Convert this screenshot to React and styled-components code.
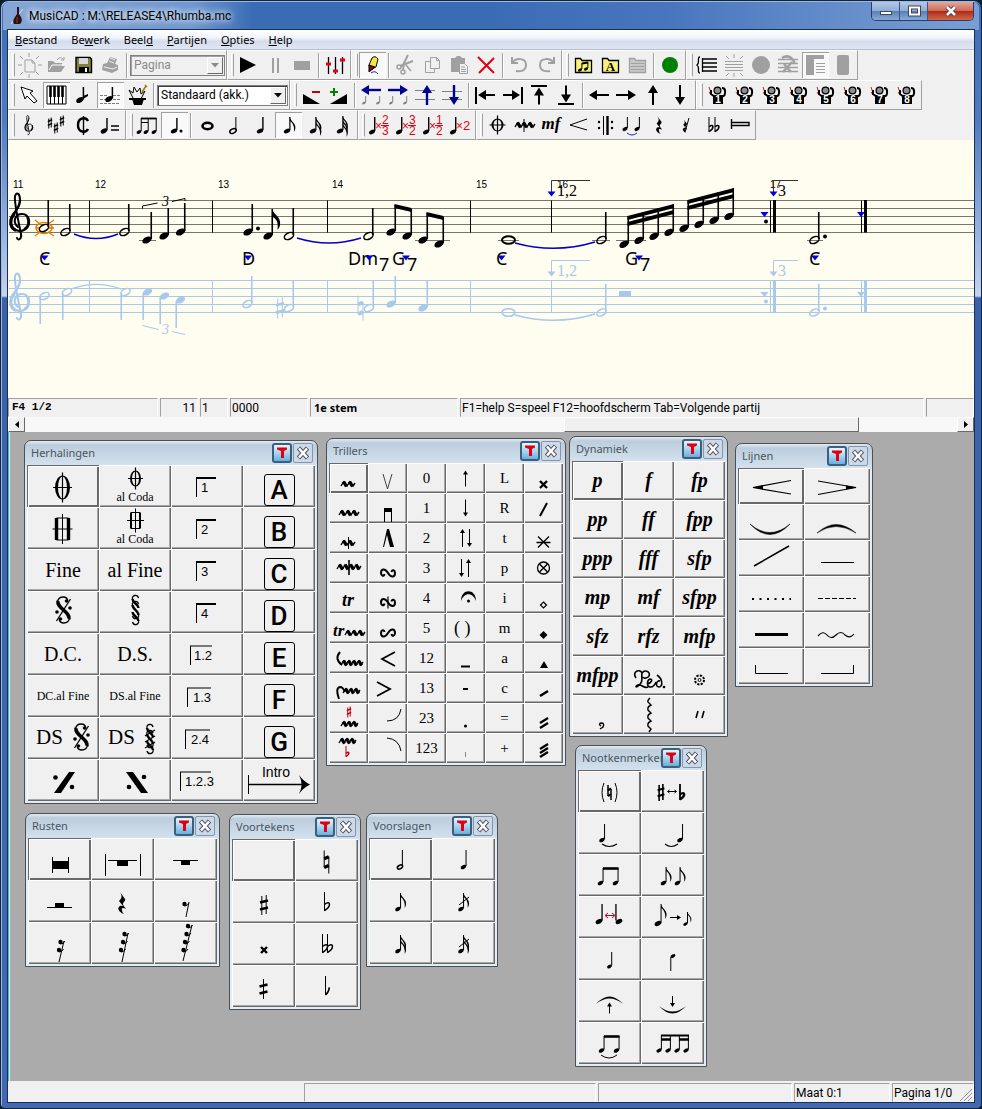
import styled, { createGlobalStyle } from "styled-components"

const ui = `"Noto Sans", "Open Sans", sans-serif`
const roboto = `Roboto, "Noto Sans", sans-serif`
const serif = `"Liberation Serif", serif`

/* ---------- notation glyphs ---------- */

const Note = ({ x, y, s = 5, top, bottom, open, flags = 0, w = 1, k = 1, left }) => {
    const sx = bottom || left ? x - s * 0.85 : x + s * 0.85
    return <g>
        <ellipse cx={x} cy={y} rx={s} ry={s * 0.62} transform={`rotate(-28 ${x} ${y})`}
            fill={open ? "none" : "currentColor"} stroke="currentColor" strokeWidth={open ? 1.5 : 0} />
        <path d={`M${sx},${y - (bottom ? -1 : 1)}V${bottom || top}`} stroke="currentColor" strokeWidth={w} />
        {Array.from({ length: flags }, (_, i) => (
            <path key={i} fill="currentColor" transform={`translate(${sx} ${top + i * 4 * k}) scale(${k})`}
                d={w > 1.5
                    ? "M0,0C.5,4 7,6 6,12C5.8,14 5,15 4,16C5,10 3,7.5 0,6Z"
                    : "M0,0C.5,4 6,6 5.5,11C5.3,13 4.6,14 4,15C5,10 3,6 0,4Z"} />
        ))}
    </g>
}

const Sharp = ({ x, y, h = 20, w = 1, half }) => {
    const a = h * 0.11, b = h * 0.2
    return <g stroke="currentColor">
        {half
            ? <path d={`M${x},${y - h / 2}V${y + h / 2}`} strokeWidth={w} />
            : <path d={`M${x - a},${y - h / 2 + 1}V${y + h / 2}M${x + a},${y - h / 2}V${y + h / 2 - 1}`} strokeWidth={w} />}
        <path d={`M${x - b},${y - h * 0.13}l${b * 2},-2M${x - b},${y + h * 0.22}l${b * 2},-2`} strokeWidth={h * 0.13} />
    </g>
}

const Natural = ({ x, y, h = 22, w = 1 }) => (
    <g stroke="currentColor">
        <path d={`M${x - h * 0.1},${y - h / 2}V${y + h * 0.24}M${x + h * 0.1},${y - h * 0.24}V${y + h / 2}`} strokeWidth={w} />
        <path d={`M${x - h * 0.1},${y - h * 0.14}l${h * 0.2},-2M${x - h * 0.1},${y + h * 0.24}l${h * 0.2},-2`} strokeWidth={h * 0.15} />
    </g>
)

const Flat = ({ x, y, h = 18, w = 1, half }) => (
    <g stroke="currentColor" fill="none">
        <path d={`M${x},${y}V${y + h}`} strokeWidth={w} />
        <path strokeWidth={w + 0.5} d={half
            ? `M${x},${y + h}Q${x + h * 0.18},${y + h * 0.85} ${x + h * 0.2},${y + h * 0.6}`
            : `M${x},${y + h * 0.65}C${x + h * 0.35},${y + h * 0.4} ${x + h * 0.35},${y + h * 0.78} ${x},${y + h - 0.5}`} />
    </g>
)

const Clef = () => (
    <g fill="none" stroke="currentColor" strokeLinecap="round">
        <path strokeWidth="2" d="M18,87C12,82 15,74 22,74C30,74 31,86 24,90C20,92 16,91 13,88" />
        <path strokeWidth="3.2" d="M15,90C9,86 10,79 14,74" />
        <path strokeWidth="2.4" d="M13,75C16,70 20,67 20,60" />
        <path strokeWidth="2" d="M20,60C20,54 17,51 15,56C14,62 17,74 21,94C22,99 18,101 17,98" />
        <path strokeWidth="3" d="M28,78C30,83 28,87 25,89" />
    </g>
)

const Coda = ({ x, y, rx = 7.5, ry = 12, t = 3 }) => (
    <g>
        <path fill="currentColor" fillRule="evenodd"
            d={`M${x - rx},${y}a${rx},${ry} 0 1 0 ${rx * 2},0a${rx},${ry} 0 1 0 ${-rx * 2},0ZM${x - rx + t},${y}a${rx - t},${ry - 1} 0 1 0 ${(rx - t) * 2},0a${rx - t},${ry - 1} 0 1 0 ${-(rx - t) * 2},0Z`} />
        <path stroke="currentColor" strokeWidth="1.2" d={`M${x},${y - ry - 3}V${y + ry + 3}M${x - rx - 2},${y}H${x + rx + 2}`} />
    </g>
)

const SquareCoda = ({ x, y, rx = 6, ry = 11, t = 3.4 }) => (
    <g stroke="currentColor" fill="none">
        <path strokeWidth={t} d={`M${x - rx},${y - ry}V${y + ry}M${x + rx},${y - ry}V${y + ry}`} />
        <path d={`M${x - rx},${y - ry}H${x + rx}M${x - rx},${y + ry}H${x + rx}M${x},${y - ry - 4}V${y + ry + 4}M${x - rx - 4},${y}H${x + rx + 4}`} />
    </g>
)

const Segno = ({ x, y }) => (
    <g transform={`translate(${x} ${y})`} fill="none" stroke="currentColor">
        <path strokeWidth="1.5" d="M4,-9C5,-14 -5,-15 -6,-8M-4,9C-5,14 5,15 6,8" />
        <path strokeWidth="3.6" d="M-5.5,-9C-7,-2 7,2 5.5,9" />
        <circle cx="3" cy="-9" r="1.3" fill="currentColor" />
        <circle cx="-3" cy="9" r="1.3" fill="currentColor" />
        <path strokeWidth="1.3" d="M7,-11L-7,11" />
        <circle cx="-6.5" cy="2" r="1.8" fill="currentColor" stroke="none" />
        <circle cx="6.5" cy="-2" r="1.8" fill="currentColor" stroke="none" />
    </g>
)

const TallSegno = ({ x, y, cross }) => (
    <g transform={`translate(${x} ${y})`} fill="none" stroke="currentColor">
        <path strokeWidth="1.3" d="M3,-12C2,-16 -4,-15 -3,-11M3,-6C2,-10 -4,-9 -3,-5M-3,6C-2,10 4,9 3,5M-3,12C-2,16 4,15 3,11" />
        <path strokeWidth="2.4" d="M-3,-11C-3,-7 3,-6 3,-2M-3,-5C-3,-1 3,1 3,5M-3,2C-3,6 3,7 3,11" />
        {cross && <path d="M5,-9L-5,-3M5,-3L-5,3M5,3L-5,9" strokeWidth="1.3" />}
    </g>
)

const Trill = ({ x, y, n, step = 6 }) => (
    <g stroke="currentColor" fill="none">
        {Array.from({ length: n }, (_, i) => (
            <path key={i} strokeWidth="3.4" d={`M${x + 2.5 + i * step},${y - 2.5}l3,5`} />
        ))}
        <path strokeWidth="1.4" d={`M${x},${y + 2}` + Array.from({ length: n }, () => `l2.5,-4l${step - 2.5},4`).join("") + "l2,-3"} />
    </g>
)

const Turn = ({ x, y, flip, cut }) => (
    <g transform={`translate(${x} ${y}) scale(1 ${flip ? -1 : 1})`} fill="none" stroke="currentColor" strokeWidth="2">
        <path d="M-3.5,1C-4,4 -7,3 -7,0C-7,-4.5 -3,-5 0,0C3,5 7,4.5 7,0C7,-3 4,-4 3.5,-1" />
        {cut && <path d="M0,-6V6" strokeWidth="1.2" />}
    </g>
)

const Arrow = ({ x, y, l, dir = "up", s = 2.5, w = 1 }) => {
    const rot = { up: 0, right: 90, down: 180, left: 270 }[dir]
    return <g transform={`translate(${x} ${y}) rotate(${rot})`}>
        <path d={`M0,${l / 2}V${-l / 2 + s}`} stroke="currentColor" strokeWidth={w} />
        <path d={`M0,${-l / 2}l${s},${s * 1.6}h${-s * 2}Z`} fill="currentColor" />
    </g>
}

const QuarterRest = ({ x, y, k = 1 }) => (
    <path transform={`translate(${x} ${y}) scale(${k})`} fill="currentColor"
        d="M-2,-11L3,-4C4,-2 1,-1 1,1C1,3 3,4 4,6C1,4 -1,5 0,7C0,9 1,10 2,11C-2,10 -5,6 -3,4C-2,2 0,3 1,3L-3,-2C-1,-4 1,-6 -2,-11Z" />
)

const FlagRest = ({ dots, stem }) => (
    <g>
        <path d={`M${stem[0]},${stem[1]}L${stem[2]},${stem[3]}`} stroke="currentColor" />
        {dots.map(([x, y]) => <g key={y}>
            <circle cx={x} cy={y} r="2.2" fill="currentColor" />
            <path d={`M${x},${y + 2}Q${x + 3},${y + 2} ${x + 4.5},${y - 1}`} fill="none" stroke="currentColor" />
        </g>)}
    </g>
)

const L = ({ d, w = 1, ...rest }) => <path d={d} fill="none" stroke="currentColor" strokeWidth={w} {...rest} />
const F = ({ d, ...rest }) => <path d={d} fill="currentColor" {...rest} />
const Dot = ({ x, y, r = 2 }) => <circle cx={x} cy={y} r={r} fill="currentColor" />
const T = ({ x, y, size = 12, children, ...rest }) => (
    <text x={x} y={y} fontSize={size} fontFamily="Liberation Serif, serif" fill="currentColor" {...rest}>{children}</text>
)

/* ---------- toolbar icons, drawn on a 27x26 grid ---------- */

const gray = "#a0a0a0"

const Folder = ({ fill, stroke, children }) => <>
    <path d="M5.5,6.5h5l1.5,2h9.5v12h-16Z" fill={fill} stroke={stroke} strokeWidth="1.3" />
    {children}
</>

const Transpose = ({ top, bottom }) => <>
    <Note x={6} y={20} s={3.2} top={5} w={1.4} />
    <g fill="#e00010" fontFamily="Liberation Sans, sans-serif" fontSize="12">
        <text x="9" y="18">×</text>
        {bottom ? <>
            <text x="16" y="12">{top}</text>
            <text x="16" y="23">{bottom}</text>
            <path d="M15,13.5h8" stroke="#e00010" />
        </> : <text x="16" y="18" fontSize="13">{top}</text>}
    </g>
</>

const Conductor = ({ n }) => <>
    <path d="M5,5L7,11M5,10l2,3" stroke="#c02020" fill="none" />
    <path d="M7,8v4l4,3M17,15q5,-1 4,-6q0,-3 -3,-3" stroke="#000" strokeWidth="2" fill="none" />
    <path d="M9,13h10v9H9Z" fill="#000" />
    <circle cx="13.5" cy="8.5" r="4" fill="#000" />
    <circle cx="13.5" cy="8.5" r="2.8" fill="#8c8c8c" />
    <text x="14" y="21" fill="#fff" fontSize="10" fontWeight="bold" textAnchor="middle" fontFamily="Liberation Sans, sans-serif">{n}</text>
</>

const fileTools = [
    ["Nieuw", <g color={gray}><L d="M9,8h7l3,3v9h-10ZM16,8v3h3M13,1v4M13,22v4M2,13h4M22,13h4M4,4l3,3M23,4l-3,3M4,23l3,-3M23,23l-3,-3" /></g>],
    ["Open", <g color={gray}><F d="M5,20V9h5l2,2h7v3h3l-4,6Z" /><L d="M14,8c3,-4 5,-2 7,0m0,-3v3h-3" /><L d="M6,18l3,-5h11" stroke="#fff" /></g>],
    ["Opslaan", <g><path d="M6,5.5h14l1.5,1.5v13.5h-15.5Z" fill="#808040" stroke="#000" strokeWidth="1.4" /><path d="M9,6h9v6h-9Z" fill="#d8d8d8" /><path d="M9,15h10v6h-10Z" fill="#000" /><path d="M15,16h2v4h-2Z" fill="#fff" /></g>],
    ["Afdrukken", <g color={gray}><F d="M6,12l4,-1l3,-6l7,2l-2,5l3,1v5l-6,3l-10,-3Z" /><L d="M13,6l5,2M12,9l5,2M7,15l9,2l4,-2" stroke="#eee" /></g>],
]
const playTools = [
    ["Speel", <F d="M5,5L21,13L5,21Z" />],
    ["Pauze", <L d="M11,6v15M16,6v15" w={2} stroke={gray} />],
    ["Stop", <rect x="5" y="9" width="16" height="9" fill={gray} />],
]
const mixTools = [["Mixer", <g><L d="M6.5,5v17M13.5,5v17M20.5,5v17" w={1.3} /><path d="M4,12h5M11,19h5M18,8h5" stroke="#e00020" strokeWidth="3" /></g>]]
const pencilTools = [["Potlood", <g><path d="M10,13L13,6Q16,3 19,7L17,15L11,18Z" fill="#f4e840" stroke="#000" /><path d="M10,13L16,15L10,20Z" fill="#801010" stroke="#000" /><path d="M12,21q4,-3 7,1" stroke="#2020c0" fill="none" /></g>, true]]
const editTools = [
    ["Knippen", <g color={gray}><L d="M16,3L10,15M21,9L8,14" w={2} /><circle cx="7" cy="15" r="2" fill="none" stroke="currentColor" strokeWidth="1.5" /><circle cx="11" cy="20" r="2" fill="none" stroke="currentColor" strokeWidth="1.5" /><L d="M12,12l-1,6M14,13l5,6" w={1.6} /></g>],
    ["Kopieren", <g color={gray}><L d="M6.5,9.5h6l3,3v8h-9Z" /><path d="M11.5,5.5h6l3,3v8h-9Z" fill="#f0f0f0" stroke="currentColor" /><L d="M17.5,5.5v3h3" /></g>],
    ["Plakken", <g color={gray}><F d="M5,6h4l2,-2h3l2,2h3v14h-14Z" /><path d="M13.5,11.5h5l3,3v7h-8Z" fill="#f0f0f0" stroke="currentColor" /><L d="M15,15h4M15,17.5h5M15,19.5h5" /></g>],
    ["Verwijderen", <L d="M5,5L21,21M21,6L6,21" w={2} stroke="#e00010" />],
]
const undoTools = [
    ["Ongedaan", <L d="M6,5v6h6M6.5,11C9,6 20,5 20,13C20,19 14,20 10,19" w={2} stroke={gray} />],
    ["Opnieuw", <L d="M21,5v6h-6M20.5,11C18,6 7,5 7,13C7,19 13,20 17,19" w={2} stroke={gray} />],
]
const folderTools = [
    ["Muziekmap", <Folder fill="#f6f27a" stroke="#000"><Note x={10} y={18} s={2.2} top={11} /><Note x={16} y={17} s={2.2} top={10} /><L d="M12,11.5l6,-1" w={2} /></Folder>],
    ["Tekstmap", <Folder fill="#f6f27a" stroke="#000"><T x={13.5} y={19} size={13} fontWeight="bold" textAnchor="middle">A</T></Folder>],
    ["Map", <Folder fill="#c8c8c8" stroke={gray}><L d="M7,11.5h13M7,14.5h13M7,17.5h13" stroke={gray} /></Folder>],
]
const recTools = [["Opname", <circle cx="13" cy="13" r="8" fill="#008000" />]]
const viewTools = [
    ["Systeem", <L d="M6,5q-2,0 -1.5,4q0,3 -1.5,4q1.5,1 1.5,4q-.5,4 1.5,4M8.5,6v14M8,7h15M8,11h15M8,15h15M8,19h15" w={1.3} />],
    ["Balk", <g color={gray}><L d="M4,9.5h18M4,12.5h18M4,15.5h18M4,18.5h18M5,4l3,3M13,2v4M22,4l-3,3M5,24l3,-3M13,25v-4M22,24l-3,-3" /></g>],
    ["Cirkel", <circle cx="13" cy="13" r="9" fill={gray} />],
    ["Balk wissen", <g color={gray}><L d="M3,7.5h20M3,11.5h20M3,15.5h20M3,19.5h20" w={1.5} /><L d="M7,6q6,-4 11,2l2,4M8,20l9,-10M9,12l7,8" w={2.5} /></g>],
    ["Indeling", <g color={gray}><F d="M4,3h18v4h-10v16h-8Z" /><L d="M14,11.5h9M14,14.5h9M14,17.5h9M14,20.5h9" /></g>, true],
    ["Kolom", <rect x="8" y="3" width="12" height="20" rx="2" fill={gray} />],
]
const modeTools = [
    ["Selecteer", <path d="M5,5L17,9L14,11L21,19L18,21L11,14L9,17Z" fill="#fff" stroke="#000" />],
    ["Klavier", <g><path d="M4,4h19v18h-19Z" fill="#fff" stroke="#000" /><L d="M7.5,4v18M11.5,4v18M15.5,4v18M19.5,4v18" /><L d="M7.5,4v11M11.5,4v11M15.5,4v11M19.5,4v11" w={2.6} /></g>, true],
    ["Noot", <g><Note x={10} y={18} s={4} top={5} w={1.5} /><F d="M13,14l5,-2v2l-5,3Z" /></g>],
    ["Noot op balk", <g><L d="M3,13.5h7M16,13.5h7M3,17.5h7M16,17.5h7M3,21.5h20" stroke="#808080" strokeDasharray="3 1" /><Note x={12} y={17} s={4} top={5} w={1.5} /></g>, true],
    ["Goochel", <g><path d="M8,17h12l-2,6h-8Z" fill="#000" /><L d="M5,17h17" w={2} /><L d="M9,16l-4,-8l4,3l1,-6l3,5l3,-4l1,6l4,-3l-4,8" /><L d="M18,10l4,-6M21,3l2,2" w={1.5} stroke="#908000" /></g>],
]
const volTools = [
    ["Zachter", <g><F d="M5,12L22,22H5Z" /><path d="M14,10h8" stroke="#c00010" strokeWidth="2" /></g>],
    ["Harder", <g><F d="M22,12L5,22H22Z" /><path d="M5,10h8M9,6v8" stroke="#008000" strokeWidth="2" /></g>],
]
const navy = "#000090"
const shiftTools = [
    ["Noten links", <g><g color={navy}><Arrow x={13} y={8} l={20} dir="left" s={5} w={2.4} /></g><g color="#808080"><Note x={6} y={21} s={2} top={14} /><Note x={20} y={21} s={2} top={14} /></g></g>],
    ["Noten rechts", <g><g color={navy}><Arrow x={13} y={8} l={20} dir="right" s={5} w={2.4} /></g><g color="#808080"><Note x={6} y={21} s={2} top={14} /><Note x={20} y={21} s={2} top={14} /></g></g>],
    ["Noten op", <g><L d="M3,8.5h20M3,17.5h20" stroke="#808080" /><g color={navy}><Arrow x={15} y={13} l={20} s={5} w={2.4} /></g></g>],
    ["Noten neer", <g><L d="M3,9.5h20M3,17.5h20" stroke="#808080" /><g color={navy}><Arrow x={15} y={13} l={20} dir="down" s={5} w={2.4} /></g></g>],
]
const jumpTools = [
    ["Begin", <g><L d="M4,5v17" w={2} /><Arrow x={14.5} y={13} l={17} dir="left" s={5} w={2} /></g>],
    ["Einde", <g><L d="M23,5v17" w={2} /><Arrow x={12.5} y={13} l={17} dir="right" s={5} w={2} /></g>],
    ["Boven", <g><L d="M5,4h16" w={2} /><Arrow x={13} y={14} l={17} s={5} w={2} /></g>],
    ["Onder", <g><L d="M5,22h16" w={2} /><Arrow x={13} y={12} l={17} dir="down" s={5} w={2} /></g>],
]
const moveTools = [["Links", "left"], ["Rechts", "right"], ["Omhoog", "up"], ["Omlaag", "down"]]
    .map(([label, dir]) => [label, <Arrow x={13} y={13} l={20} dir={dir} s={5} w={2} />])
const partTools = [1, 2, 3, 4, 5, 6, 7, 8].map((n) => [`Partij ${n}`, <Conductor n={n} />])
const keyTools = [
    ["Sleutel", <g transform="translate(4.5 -19) scale(.42)"><Clef /></g>],
    ["Voortekening", <g><Sharp x={7} y={11} h={11} /><Sharp x={13} y={16} h={11} /><Sharp x={19} y={9} h={11} /></g>],
    ["Maatsoort", <g><L d="M18,9C16,5 8,5 8,13C8,21 16,21 18,17" w={2.4} /><L d="M13.5,4v19" w={1.4} /></g>],
    ["Tempo", <g><Note x={7} y={19} s={3.5} top={6} w={1.4} /><L d="M14,14h8M14,18h8" w={1.3} /></g>],
]
const groupTools = [
    ["Balken", <g><Note x={5} y={20} s={2.6} top={6} /><Note x={12} y={20} s={2.6} top={6} /><Note x={20} y={20} s={2.6} top={6} /><L d="M7,6.5h15.5" w={1.8} /><L d="M7,10.5h7" /></g>],
    ["Gepunt", <g><Note x={13} y={19} s={3.4} top={6} w={1.4} /><Dot x={20} y={19} r={1.5} /></g>, true],
]
const lengthTools = [
    ["Hele", <ellipse cx="13.5" cy="14" rx="5" ry="3.2" fill="none" stroke="#000" strokeWidth="2.6" />],
    ["Halve", <Note x={12} y={19} s={3.4} top={5} open />],
    ["Kwart", <Note x={12} y={19} s={3.4} top={5} w={1.4} />],
    ["Achtste", <Note x={12} y={19} s={3.4} top={5} w={1.2} flags={1} />, true],
    ["Zestiende", <Note x={11} y={19} s={3.4} top={5} w={1.2} flags={2} />],
    ["32e", <Note x={11} y={19} s={3.4} top={4} w={1.2} flags={3} k={0.9} />],
]
const ratioTools = [
    ["x 2/3", <Transpose top="2" bottom="3" />],
    ["x 3/2", <Transpose top="3" bottom="2" />],
    ["x 1/2", <Transpose top="1" bottom="2" />],
    ["x 2", <Transpose top="2" />],
]
const signTools = [
    ["Coda", <Coda x={13.5} y={13} rx={6} ry={6.5} t={2} />],
    ["Triller", <g><Trill x={4} y={13} n={3} /><L d="M13,7v13" /></g>],
    ["mf", <T x={13} y={17} size={17} fontWeight="bold" fontStyle="italic" textAnchor="middle">mf</T>],
    ["Lijn", <L d="M22,7L5,13L22,18" />],
    ["Herhaling", <g><L d="M11.5,4v19" /><L d="M15.5,4v19" w={2.4} /><Dot x={7} y={10} r={1.2} /><Dot x={7} y={16} r={1.2} /><Dot x={20} y={10} r={1.2} /><Dot x={20} y={16} r={1.2} /></g>],
    ["Boog", <g><Note x={6} y={17} s={2.8} top={5} /><Note x={18} y={17} s={2.8} top={5} /><L d="M8,21q5,4 10,0" stroke="#2020a0" /></g>],
    ["Rust", <QuarterRest x={13} y={13} k={0.8} />],
    ["Rust weg", <g><QuarterRest x={12} y={14} k={0.6} /><L d="M16,6l-4,14" /></g>],
    ["Mollen", <g><Flat x={9} y={5} h={15} /><Flat x={15} y={5} h={15} /></g>],
    ["Liniaal", <L d="M4.5,7v10M4,10.5h18v3h-18" w={1.4} />],
]

/* ---------- palettes ---------- */

const Volta = ({ x = 25, w = 20, label, tx }) => <>
    <L d={`M${x}.5,32V13`} />
    <L d={`M${x},13H${x + w}`} w={label.length > 1 ? 1 : 2} />
    <text x={tx || x + 5} y={27} fontSize="13" fontFamily="Liberation Sans, sans-serif">{label}</text>
</>

const small = (text) => ({ text, size: 12 })

const herhalingen = [
    <Coda x={35.5} y={22.5} />,
    <><Coda x={36.5} y={13.5} rx={5.5} ry={8} t={2} /><T x={36} y={36} size={12} textAnchor="middle">al Coda</T></>,
    <Volta label="1" />, { box: "A" },
    <SquareCoda x={35.5} y={22} />,
    <><SquareCoda x={36.5} y={13.5} rx={4.5} ry={8} t={2} /><T x={36} y={36} size={12} textAnchor="middle">al Coda</T></>,
    <Volta label="2" />, { box: "B" },
    "Fine", "al Fine", <Volta label="3" />, { box: "C" },
    <Segno x={36.5} y={19} />, <TallSegno x={36.5} y={19} />, <Volta label="4" />, { box: "D" },
    "D.C.", "D.S.", <Volta x={19} w={22} tx={23} label="1.2" />, { box: "E" },
    small("DC.al Fine"), small("DS.al Fine"), <Volta x={16} w={24} tx={22} label="1.3" />, { box: "F" },
    <><T x={9} y={27} size={21}>DS</T><Segno x={54.5} y={20} /></>,
    <><T x={9} y={27} size={21}>DS</T><TallSegno x={51} y={22} cross /></>,
    <Volta x={14} w={25} tx={20} label="2.4" />, { box: "G" },
    <><F d="M27,34L42,13H48L34,34Z" /><Dot x={28.5} y={18.5} r={2.3} /><Dot x={45} y={28} r={2.3} /></>,
    <><F d="M27,13H34L49,34H42Z" /><Dot x={45} y={18} r={2.3} /><Dot x={30} y={28} r={2.3} /></>,
    <Volta x={9} w={31} tx={14} label="1.2.3" />,
    <><text x="33" y="18" fontSize="14" textAnchor="middle" fontFamily="Liberation Sans, sans-serif">Intro</text>
        <L d="M5.5,16V35" /><L d="M6,25.5H62" w={1.4} /><F d="M56,16Q60,22 67,25.5Q60,29 56,35Q61,25.5 56,16Z" /></>,
]

const trillers = [
    <Trill x={12} y={21} n={2} />, <L d="M15,11L19.5,26L24,11" stroke="#444" />, "0", <Arrow x={19.5} y={15.5} l={16} />, "L", <L d="M16,18l7,7M23,18l-7,7" w={2.4} />,
    <Trill x={10} y={20} n={3} />, <><F d="M16,15h8v4h-8Z" /><L d="M16.5,15v14M23.5,15v14" /></>, "1", <Arrow x={19.5} y={15} l={17} dir="down" />, "R", <L d="M16,23L23,10" w={2} />,
    <><Trill x={12} y={20} n={2} /><L d="M19.5,14v12" /></>, <F d="M15,24L19,6H21L26,24H22L19,12L16,24Z" />, "2", <><Arrow x={16.5} y={15} l={18} /><Arrow x={23.5} y={15} l={18} dir="down" /></>, "t", <L d="M14,13.5l11,11M25,13.5l-11,11M12.5,19.5h14" w={1.3} />,
    <><Trill x={8} y={14} n={4} step={5.5} /><L d="M20,7v15" w={1.6} /></>, <Turn x={20} y={20} />, "3", <><Arrow x={15.5} y={15} l={18} dir="down" /><Arrow x={22.5} y={15} l={18} /></>, "p", <><circle cx="19.5" cy="15" r="6" fill="none" stroke="#000" strokeWidth="1.3" /><L d="M15.5,11l8,8M23.5,11l-8,8" w={1.4} /></>,
    <T x={13} y={23} size={18} fontWeight="bold" fontStyle="italic">tr</T>, <Turn x={20} y={19.5} cut />, "4", <><F d="M15,18C15,5 30,5 30,18C27,9 18,9 15,18Z" /><Dot x={22.5} y={18} r={1.5} /></>, "i", <path d="M19.5,19l3,3l-3,3l-3,-3Z" fill="none" stroke="#000" strokeWidth="1.2" />,
    <><T x={4} y={23} size={17} fontWeight="bold" fontStyle="italic">tr</T><Trill x={16} y={20} n={3} /></>, <Turn x={20} y={20} flip />, "5", <T x={8} y={21} size={18}>( )</T>, "m", <F d="M19.5,18l4,4l-4,4l-4,-4Z" />,
    <><L d="M11,9Q5,16 13,22" w={2} /><Trill x={12} y={20} n={4} step={5} /></>, <L d="M27,9L14,16L27,23" w={1.8} />, "12", <L d="M15,23.5h9" w={2} />, "a", <F d="M20,18l4,7h-8Z" />,
    <><L d="M10,26Q6,15 11,14Q14,14 16,19" w={2} /><Trill x={14} y={18} n={3} step={5} /></>, <L d="M9,9L22,16L9,23" w={1.8} />, "13", <L d="M17,16h5" w={2} />, "c", <L d="M16,23L24,18" w={2.6} />,
    <><g color="#c00010"><Sharp x={20} y={9} h={11} /></g><Trill x={12} y={21} n={3} step={5} /></>, <L d="M19,18Q31,18 33,6" />, "23", <Dot x={19.5} y={23} r={1.5} />, "=", <L d="M16,20L24,15M16,25L24,20" w={2.2} />,
    <><Trill x={10} y={8} n={3} step={5} /><g color="#c00010"><Flat x={17} y={13} h={11} /></g></>, <L d="M19,5Q31,6 33,18" />, "123", <L d="M19.5,19v5" stroke="#888" />, "+", <L d="M16,16L24,11M16,20L24,15M16,24L24,19" w={2.2} />,
]

const dynamiek = [
    "p", "f", "fp", "pp", "ff", "fpp", "ppp", "fff", "sfp", "mp", "mf", "sfpp", "sfz", "rfz", "mfp", "mfpp",
    <><L w={1.6} d="M13,22C9,16 16,12 19,17C22,13 28,16 26,20C25,22 21,23 20,21M19,17C18,22 21,26 15,30C13,32 12,30 15,29C19,28 21,33 25,31M24,28C29,27 30,23 27,23C24,24 23,31 28,31C31,31 32,28 33,26M37,25C33,24 32,31 36,31C40,31 40,23 34,19" /><Dot x={41} y={31} r={1.3} /></>,
    <><circle cx="25.5" cy="24" r="4.5" fill="none" stroke="#000" strokeWidth="2" strokeDasharray="2.2 1.3" /><circle cx="25.5" cy="24" r="1.5" fill="none" stroke="#000" /></>,
    <L w={1.4} d="M29,31q-3,-2 0,-3q4,0 2,4l-3,2" />,
    <L w={1.4} d="M27,3q-3,3 -2,4l3,3q-4,2 -3,5l3,3q-4,2 -3,5l3,3q-4,2 -3,5l3,3l-2,3" />,
    <L w={1.6} d="M24,16L22,23M30,16L28,23" />,
]

const lijnen = [
    <><L d="M53,12.5L15,19.5L53,26" w={1.2} /><F d="M15,19.5L25,17.5V21.5Z" /></>,
    <><L d="M14,13L52,19.5L14,26.5" w={1.2} /><F d="M52,19.5L42,17.5V21.5Z" /></>,
    <F d="M12,20Q32,37 52,20Q32,41 12,20Z" stroke="currentColor" strokeWidth=".5" />,
    <F d="M13,29Q32,12 52,29Q32,16 13,29Z" stroke="currentColor" strokeWidth=".5" />,
    <L d="M16,26L51,6" w={1.5} />, <L d="M17,22.5H50" />,
    <L d="M14,23H53" w={2} strokeDasharray="2 5.5" />, <L d="M14,22.5H52" strokeDasharray="5 2" />,
    <L d="M17,22.5H50" w={3} />, <L d="M14,24q5,-6 9,-1q4,5 9,0q5,-5 9,0q5,4 9,-1" w={1.2} />,
    <L d="M17.5,17V25.5H50" />, <L d="M49.5,17V25.5H17" />,
]

const rusten = [
    <><F d="M25,23h16v8h-16Z" /><L d="M24.5,19v16M40.5,19v16" /></>,
    <><L d="M14.5,16v22M49.5,16v22M17,22.5H46" /><F d="M26,22h11v6h-11Z" /></>,
    <><L d="M19,22.5H44" /><F d="M27,22h9v5h-9Z" /></>,
    <><L d="M19,27.5H44" /><F d="M27,23h9v4h-9Z" /></>,
    <QuarterRest x={31} y={23} />,
    <FlagRest dots={[[30.5, 24]]} stem={[35, 22, 32, 37]} />,
    <FlagRest dots={[[32.5, 20], [31, 28]]} stem={[36, 19, 31, 40]} />,
    <FlagRest dots={[[33.5, 12], [32, 20], [30, 28]]} stem={[37, 11, 31, 40]} />,
    <FlagRest dots={[[34, 4], [32.5, 12], [31, 20], [29.5, 28]]} stem={[38, 3, 29, 39]} />,
]

const voortekens = [
    null, <Natural x={31.5} y={23} h={23} />,
    <Sharp x={32} y={24} h={20} />, <Flat x={29.5} y={11} h={19} />,
    <L d="M29,24l6,6M35,24l-6,6" w={2.4} />, <><Flat x={27.5} y={11} h={19} /><Flat x={32.5} y={11} h={19} /></>,
    <Sharp x={31.5} y={24} h={20} half />, <Flat x={30.5} y={11} h={19} half />,
]

const voorslagen = [
    <Note x={31} y={29} s={2.8} top={12} open />, <Note x={31.5} y={29} s={3} top={12} />,
    <Note x={29} y={29} s={3} top={13} flags={1} />, <><Note x={29} y={29} s={3} top={13} flags={1} /><L d="M27,25L37,17" /></>,
    <Note x={29} y={29} s={3} top={13} flags={2} />, <><Note x={29} y={29} s={3} top={13} flags={2} /><L d="M27,25L37,17" /></>,
]

const redSwap = <g color="#c00010"><L d="M28,19.5h8M30,17l-3,2.5l3,2.5M34,17l3,2.5l-3,2.5" /></g>

const nootkenmerken = [
    <><Natural x={31.5} y={22.5} h={15} w={1.5} /><L d="M26,13Q22,22.5 26,32M37,13Q41,22.5 37,32" /></>,
    <><Sharp x={20} y={22.5} h={17} w={1.6} /><L d="M27,21.5h8M28.5,20l-2,1.5l2,1.5M33.5,20l2,1.5l-2,1.5" /><Flat x={39} y={14} h={16} w={1.8} /></>,
    <><Note x={24} y={28} s={3} top={12} /><L d="M24,32q7,5 15,0" w={1.2} /></>,
    <><Note x={39} y={28} s={3} top={12} /><L d="M24,32q6,5 13,0" w={1.2} /></>,
    <><Note x={22.5} y={29} s={3} top={14} /><Note x={37.5} y={29} s={3} top={14} /><L d="M25,14.5H40.5" w={2.6} /></>,
    <><Note x={22.5} y={29} s={3} top={13} flags={1} /><Note x={36.5} y={29} s={3} top={13} flags={1} /></>,
    <><Note x={21} y={25.5} s={3.6} top={8} w={1.3} /><Note x={41} y={25.5} s={3.6} top={8} w={1.3} left />{redSwap}</>,
    <><Note x={17} y={27.5} s={3.6} top={8} flags={1} /><Arrow x={34.5} y={21.5} l={11} dir="right" /><Note x={44.5} y={28} s={2.4} top={16} flags={1} k={0.7} /></>,
    <Note x={31.5} y={28.5} s={2.6} top={14} />,
    <Note x={32} y={18} s={2.6} bottom={33} />,
    <><F d="M18,24Q31.5,9 45,24Q31.5,13 18,24Z" /><Arrow x={31.5} y={28} l={11} /></>,
    <><F d="M18,26Q31.5,41 45,26Q31.5,37 18,26Z" /><Arrow x={31.5} y={21.5} l={11} dir="down" /></>,
    <><Note x={23.5} y={28.5} s={3} top={14} /><Note x={38.5} y={28.5} s={3} top={14} /><L d="M26,14.5H41.5" w={2.6} /><L d="M23,33q8,6 16,0" /></>,
    <>{[18, 27, 36, 45].map((x) => <Note key={x} x={x} y={28.5} s={2.8} top={13} />)}<L d="M20,13.5H48" w={2} /><L d="M20,17.5H30M38,17.5H48" w={2.4} /></>,
]

const palettes = [
    { title: "Herhalingen", x: 16, y: 8, cols: 4, w: 72, h: 42, cells: herhalingen, font: `20px ${serif}` },
    { title: "Trillers", x: 318, y: 6, cols: 6, w: 39, h: 30, cells: trillers, font: `15px ${serif}` },
    { title: "Dynamiek", x: 561, y: 4, cols: 3, w: 51, h: 39, cells: dynamiek, font: `italic bold 20px ${serif}` },
    { title: "Lijnen", x: 727, y: 11, cols: 2, w: 66, h: 36, cells: lijnen },
    { title: "Rusten", x: 17, y: 381, cols: 3, w: 63, h: 42, cells: rusten },
    { title: "Voortekens", x: 221, y: 382, cols: 2, w: 63, h: 42, cells: voortekens },
    { title: "Voorslagen", x: 358, y: 381, cols: 2, w: 63, h: 42, cells: voorslagen },
    { title: "Nootkenmerken", x: 567, y: 313, cols: 2, w: 63, h: 42, cells: nootkenmerken },
]

const Cell = ({ cell, w, h, label }) => {
    if (typeof cell === "string") return <CellButton>{cell}</CellButton>
    if (cell && cell.text) return <CellButton $size={cell.size}>{cell.text}</CellButton>
    if (cell && cell.box) return <CellButton><Letter>{cell.box}</Letter></CellButton>
    return <CellButton aria-label={label}>
        <svg width={w} height={h} viewBox={`0 0 ${w} ${h}`}>{cell}</svg>
    </CellButton>
}

const Palette = ({ title, x, y, cols, w, h, cells, font }) => (
    <PaletteWindow $x={x} $y={y}>
        <PaletteTitle $width={cols * w}>
            <h2>{title}</h2>
            <PinButton aria-label={`${title} vastzetten`}>
                <svg width="16" height="16"><path d="M3,2.5h10v2l-3,1.5v7h-3v-7l-4,-1.5Z" fill="#e00010" /></svg>
            </PinButton>
            <CloseButton aria-label={`${title} sluiten`}>
                <svg width="16" height="16"><path d="M3.5,3l9,10M12.5,3l-9,10" stroke="#556" strokeWidth="4.6" /><path d="M4,3.5l8,9M12,3.5l-8,9" stroke="#fff" strokeWidth="2.6" /></svg>
            </CloseButton>
        </PaletteTitle>
        <CellGrid $cols={cols} $w={w} $h={h} $font={font}>
            {cells.map((cell, i) => <Cell key={i} cell={cell} w={w} h={h} label={`${title} ${i + 1}`} />)}
        </CellGrid>
    </PaletteWindow>
)

const Tools = ({ items }) => items.map(([label, icon, pressed]) => (
    <ToolButton key={label} aria-label={label} $pressed={pressed}>
        <svg width="27" height="26" viewBox="0 0 27 26">{icon}</svg>
    </ToolButton>
))

const Combo = ({ label, value, width, disabled }) => (
    <ComboBox $width={width} $disabled={disabled}>
        <select aria-label={label} defaultValue={value} disabled={disabled}><option>{value}</option></select>
        <span><svg width="8" height="5"><path d="M0,0h8l-4,4.5Z" fill="currentColor" /></svg></span>
    </ComboBox>
)

/* ---------- score ---------- */

const Staff = ({ y, stroke, bar }) => <g>
    {[0, 8, 16, 24, 32].map((d) => <line key={d} x1="9" x2="110%" y1={y + d} y2={y + d} stroke={stroke} />)}
    {[89.5, 212.5, 327.5, 470.5, 551.5, 770.5, 861.5].map((x) => <line key={x} x1={x} x2={x} y1={y} y2={y + 32} stroke={bar} />)}
    {[774.5, 865.5].map((x) => <line key={x} x1={x} x2={x} y1={y - 0.5} y2={y + 32} stroke={bar} strokeWidth="3" />)}
</g>

const Mark = ({ x, y }) => <path d={`M${x - 4},${y - 2}h8l-4,5Z`} fill="var(--mark)" />

const Endings = ({ y }) => <>
    <L d={`M551.5,${y + 13}V${y}H590M773.5,${y + 13}V${y}H798`} stroke="var(--ending)" />
    <Mark x={551.5} y={y + 13} />
    <Mark x={773.5} y={y + 13} />
    <T x={557} y={y + 15.5} size={16}>1,2</T>
    <T x={778} y={y + 15.5} size={16}>3</T>
    <Dot x={766} y={y + 41} r={2} />
    <Mark x={764.5} y={y + 33.5} />
    <Mark x={861} y={y + 33.5} />
</>

const measures = [[11, 13], [12, 95], [13, 218], [14, 332], [15, 476], [16, 557], [17, 770]]
const chords = [["C", 39, 44.5], ["D", 242, 248], ["Dm", 348, 369, 379], ["G", 392, 406, 407], ["C", 496, 501.5], ["G", 625, 639, 640], ["C", 809, 815]]
const runs = [624, 639, 654, 669, 684, 699, 714, 729]

const Score = () => (
    <ScoreArea>
        <svg width="100%" height="258" role="img" aria-label="Partituur Rhumba">
            <g transform="translate(-8 0)">
                <Staff y={60.5} stroke="#77776c" bar="#000" />
                <g fontFamily="Liberation Sans, sans-serif" fontSize="10">
                    {measures.map(([n, x]) => <text key={n} x={x} y="48">{n}</text>)}
                </g>
                <Clef />
                <L d="M139,100.5h17M415,100.5h19M432,100.5h18M498,100.5h21M592,100.5h18M616,100.5h18M632,100.5h14M807,100.5h16" stroke="#77776c" />
                <g color="#e08000">
                    <ellipse cx="44" cy="88" rx="8" ry="5.5" fill="none" stroke="currentColor" strokeWidth="1.5" />
                    <L d="M35,80l5,4M54,80l-6,4M35,96l5,-4M54,96l-6,-4M36,88h3M49,88h5" w={1.3} />
                </g>
                <Note x={44} y={88} top={60} w={1.6} open />
                <Note x={65.5} y={92} top={64} w={1.6} open />
                <Note x={124.5} y={92} top={64} w={1.6} open />
                <Note x={147} y={100} top={72} w={1.6} />
                <Note x={164} y={96} top={68} w={1.6} />
                <Note x={180.5} y={92} top={63} w={1.6} />
                <L d="M142.5,68.5v-2.5l15,-3M172,61.5l13,-3v2.5" />
                <T x={162} y={66} size={14} fontStyle="italic">3</T>
                <Note x={248} y={92} top={64} w={1.6} />
                <Dot x={258} y={88.5} />
                <Note x={268} y={96} top={69} w={1.6} flags={1} k={1.3} />
                <Note x={289} y={96} top={68} w={1.6} open />
                <Note x={368.5} y={96} top={68} w={1.6} open />
                <Note x={391} y={92} top={65} w={1.6} />
                <Note x={407} y={96} top={69} w={1.6} />
                <F d="M394.5,64l17,4v4l-17,-4Z" />
                <Note x={423} y={100} top={73} w={1.6} />
                <Note x={439} y={104} top={77} w={1.6} />
                <F d="M426.5,72l17,4v4l-17,-4Z" />
                <ellipse cx="508.5" cy="100" rx="6.5" ry="3.8" fill="none" stroke="#000" strokeWidth="2" />
                <Note x={601.5} y={100} top={72} w={1.6} open />
                {runs.map((x, i) => <Note key={x} x={x} y={104.3 - i * 4} top={i < 4 ? 76 - i * 4 : 60 - (i - 4) * 4} w={1.6} />)}
                <F d="M627.5,76L674,64v4L627.5,80ZM627.5,82L674,70v4L627.5,86ZM687.5,60L734,48v4L687.5,64ZM687.5,66L734,54v4L687.5,70Z" />
                <Note x={814.5} y={100} top={72} w={1.6} open />
                <Dot x={825} y={96.5} />
                <L d="M74,94Q96,103 118,94M297,98Q329,108 361,98M515,103Q555,114 595,102" stroke="#0000c8" w={1.4} />
                <Endings y={40.5} />
                {chords.map(([name, x, mark, seven]) => <g key={x}>
                    <ChordText x={x} y="125">{name}</ChordText>
                    {seven && <ChordText x={seven} y="131">7</ChordText>}
                    <Mark x={mark} y={117.5} />
                </g>)}
            </g>
            <Second transform="translate(-8 0)">
                <Staff y={140.5} stroke="#a8c8ec" bar="#a8c8ec" />
                <g transform="translate(0 80)"><Clef /></g>
                <Note x={44.5} y={156} bottom={184} w={1.6} open />
                <Note x={67} y={152} bottom={180} w={1.6} open />
                <Note x={125.5} y={152} bottom={180} w={1.6} open />
                <Note x={147.5} y={152} bottom={180} w={1.6} />
                <Note x={164.5} y={156} bottom={184} w={1.6} />
                <Note x={180.5} y={160} bottom={188} w={1.6} />
                <L d="M142.5,185.5l16,4M172,191.5l13,3" />
                <T x={162} y={194} size={14} fontStyle="italic">3</T>
                <Note x={247.5} y={164} top={136} w={1.6} open />
                <Sharp x={280} y={168} h={21} />
                <Note x={289} y={168} top={140} w={1.6} open />
                <Natural x={360.5} y={168} h={25} />
                <Note x={369} y={168} top={140} w={1.6} open />
                <Note x={391} y={164} top={136} w={1.6} />
                <Note x={423} y={168} top={140} w={1.6} />
                <ellipse cx="508.5" cy="172.5" rx="6.5" ry="3.8" fill="none" stroke="currentColor" strokeWidth="1.6" />
                <Note x={601.5} y={172.5} top={144} w={1.6} open />
                <F d="M619,151h12v5h-12Z" />
                <Note x={814.5} y={172.5} top={144} w={1.6} open />
                <Dot x={825} y={168.5} />
                <L d="M73,148.5Q97,140 121,149M515,175Q555,186 595,174" w={1.4} />
                <Endings y={120.5} />
            </Second>
        </svg>
    </ScoreArea>
)

const menu = [["", "B", "estand"], ["Be", "w", "erk"], ["Beel", "d", ""], ["", "P", "artijen"], ["", "O", "pties"], ["", "H", "elp"]]

const App = () => (
    <Window>
        <GlobalStyle />
        <TitleBar>
            <svg width="16" height="20" aria-hidden="true">
                <path d="M2,18L14,3" stroke="#ddd" />
                <path d="M8,1h2v7l2,3q2,4 -1,7h-6q-2,-3 1,-7l2,-3Z" fill="#2a1410" />
                <path d="M8,11v6" stroke="#a03020" />
            </svg>
            <h1>MusiCAD : M:\RELEASE4\Rhumba.mc</h1>
            <Caption>
                <button aria-label="Minimaliseren"><svg width="14" height="12"><rect x="1.5" y="6.5" width="11" height="3" fill="#fff" stroke="#445" /></svg></button>
                <button aria-label="Maximaliseren"><svg width="14" height="12"><path d="M3,2.5h9v7h-9Z" fill="none" stroke="#445" strokeWidth="4" /><path d="M3,2.5h9v7h-9Z" fill="none" stroke="#fff" strokeWidth="2" /></svg></button>
                <button aria-label="Sluiten"><svg width="14" height="12"><path d="M3,2l8,8M11,2l-8,8" stroke="#533" strokeWidth="4.5" /><path d="M3,2l8,8M11,2l-8,8" stroke="#fff" strokeWidth="2.6" /></svg></button>
            </Caption>
        </TitleBar>
        <Client>
            <MenuBar>
                {menu.map(([a, key, b]) => <button key={a + key + b}>{a}<u>{key}</u>{b}</button>)}
            </MenuBar>
            <ToolRow>
                <ToolGroup>
                    <Tools items={fileTools} /><Sep />
                    <Combo label="Weergave" value="Pagina" width={95} disabled />
                </ToolGroup>
                <ToolGroup><Tools items={playTools} /><Sep /><Tools items={mixTools} /></ToolGroup>
                <ToolGroup><Tools items={pencilTools} /><Sep /><Tools items={editTools} /><Sep /><Tools items={undoTools} /></ToolGroup>
                <ToolGroup><Tools items={folderTools} /><Sep /><Tools items={recTools} /></ToolGroup>
                <ToolGroup><Tools items={viewTools} /></ToolGroup>
            </ToolRow>
            <ToolRow>
                <ToolGroup>
                    <Tools items={modeTools} /><Sep />
                    <Combo label="Stijl" value="Standaard (akk.)" width={131} />
                </ToolGroup>
                <ToolGroup>
                    <Tools items={volTools} /><Sep /><Tools items={shiftTools} /><Sep />
                    <Tools items={jumpTools} /><Sep /><Tools items={moveTools} />
                </ToolGroup>
                <ToolGroup><Tools items={partTools} /></ToolGroup>
            </ToolRow>
            <ToolRow>
                <ToolGroup><Tools items={keyTools} /></ToolGroup>
                <ToolGroup><Tools items={groupTools} /><Sep /><Tools items={lengthTools} /></ToolGroup>
                <ToolGroup><Tools items={ratioTools} /></ToolGroup>
                <ToolGroup><Tools items={signTools} /></ToolGroup>
            </ToolRow>
            <Score />
            <StatusBar>
                <Status $w={150} $mono>F4 1/2</Status>
                <Status $w={38} $right>11</Status>
                <Status $w={28}>1</Status>
                <Status $w={78}>0000</Status>
                <Status $w={148} $bold>1e stem</Status>
                <Status>F1=help S=speel F12=hoofdscherm Tab=Volgende partij</Status>
                <Status $w={48} />
            </StatusBar>
            <ScrollBar>
                <button aria-label="Naar links"><svg width="4" height="7"><path d="M4,0v7l-4,-3.5Z" /></svg></button>
                <Track $grow={541} />
                <Thumb $grow={294} />
                <Track $grow={98} />
                <button aria-label="Naar rechts"><svg width="4" height="7"><path d="M0,0v7l4,-3.5Z" /></svg></button>
            </ScrollBar>
            <Workspace>
                {palettes.map((p) => <Palette key={p.title} {...p} />)}
            </Workspace>
            <StatusBar $tall>
                <Status $plain />
                <Status $w={292} />
                <Status $w={194} />
                <Status $w={96}>Maat 0:1</Status>
                <Status $w={82}>Pagina 1/0
                    <svg width="14" height="14"><path d="M14,2L2,14M14,6L6,14M14,10L10,14" stroke="#909090" /></svg>
                </Status>
            </StatusBar>
        </Client>
    </Window>
)

const GlobalStyle = createGlobalStyle`
    * { box-sizing:border-box; }
    body {
        margin:0;
        background:#06202a;
        font:11px/16px ${ui};
        color:#000;
    }
    button, select { font:inherit; color:inherit; }
    svg { display:block; }
`
const Window = styled.div`
    min-height:100vh;
    display:flex;
    flex-direction:column;
    padding:0 7px 6px;
    border:1px solid #14233c;
    border-radius:8px 8px 5px 5px;
    background:linear-gradient(#3a6cb6 0, #4f7cc0 120px, #a9c2e8 260px, #c3d5ef 295px, #3862ac 297px, #3f6ab2 100%);
    box-shadow:inset 1px 1px 0 #9db8dc;
`
const TitleBar = styled.header`
    height:28px;
    display:flex;
    align-items:center;
    gap:4px;
    background:linear-gradient(90deg, #86a7d6 0, #6f97d0 190px, #3a6cb5 250px, #3a6cb5 50%, #4876be 68%, #7b9fd4 100%);
    margin:1px -5px 0;
    padding-left:6px;
    border-radius:6px 6px 0 0;
    h1 {
        flex:1;
        margin:0;
        font:12px/16px ${roboto};
        text-shadow:0 0 6px #fff, 0 0 8px #fff;
    }
`
const Caption = styled.div`
    align-self:flex-start;
    display:flex;
    margin-right:5px;
    border:1px solid #2b3f63;
    border-top:0;
    border-radius:0 0 5px 5px;
    overflow:hidden;
    button {
        width:28px;
        height:18px;
        display:flex;
        align-items:center;
        justify-content:center;
        padding:0;
        border:0;
        border-right:1px solid #3c5582;
        background:linear-gradient(#b4c8e4 0, #8faed8 48%, #5c80b4 52%, #86aad8 100%);
    }
    button:last-child {
        width:45px;
        border-right:0;
        background:linear-gradient(#e0a99c 0, #cf6b58 48%, #b02c18 52%, #d06848 100%);
    }
`
const Client = styled.main`
    flex:1;
    display:flex;
    flex-direction:column;
    background:#f0f0f0;
    outline:1px solid #1c2f50;
`
const MenuBar = styled.nav`
    height:20px;
    display:flex;
    align-items:center;
    background:linear-gradient(#fff 0, #f2f4fa 40%, #d5dcec 60%, #dfe5f2 100%);
    border-bottom:1px solid #b8bccc;
    button {
        padding:0 7px;
        border:0;
        background:none;
        line-height:18px;
    }
`
const ToolRow = styled.div`
    display:flex;
    height:30px;
`
const ToolGroup = styled.div`
    display:flex;
    align-items:center;
    padding:0 1px 0 3px;
    border:1px solid #fff;
    border-right-color:#a0a0a0;
    border-bottom-color:#a0a0a0;
    &::before {
        content:"";
        box-sizing:border-box;
        width:3px;
        height:24px;
        margin-right:1px;
        border:1px solid #fff;
        border-right-color:#a0a0a0;
    }
`
const ToolButton = styled.button`
    width:27px;
    height:26px;
    padding:0;
    border:0;
    color:#000;
    background:${(p) => (p.$pressed ? "#f9f9f9" : "none")};
    box-shadow:${(p) => (p.$pressed ? "inset 1px 1px 0 #a0a0a0, inset -1px -1px 0 #fff" : "none")};
`
const Sep = styled.span`
    width:2px;
    height:25px;
    margin:0 2px;
    border-left:1px solid #a0a0a0;
    border-right:1px solid #fff;
`
const ComboBox = styled.div`
    display:flex;
    width:${(p) => p.$width}px;
    height:21px;
    border:1px solid #808080;
    box-shadow:inset 1px 1px 0 ${(p) => (p.$disabled ? "#a0a0a0" : "#404040")};
    background:${(p) => (p.$disabled ? "#f0f0f0" : "#fff")};
    color:${(p) => (p.$disabled ? "#8a8a8a" : "#000")};
    padding:1px;
    select {
        flex:1;
        min-width:0;
        appearance:none;
        border:0;
        padding:0 2px;
        background:none;
        opacity:1;
        font:12px/16px ${roboto};
    }
    span {
        width:16px;
        display:flex;
        align-items:center;
        justify-content:center;
        background:#f0f0f0;
        border:1px solid #fff;
        border-right-color:#696969;
        border-bottom-color:#696969;
    }
`
const ScoreArea = styled.section`
    height:258px;
    overflow:hidden;
    background:#fffdf0;
    color:#000;
    --mark:#0000e0;
    --ending:#333;
`
const Second = styled.g`
    color:#a8c8ec;
    --mark:#a8c8ec;
    --ending:#a8c8ec;
`
const ChordText = styled.text`
    font:18px ${ui};
`
const StatusBar = styled.footer`
    display:flex;
    gap:2px;
    height:${(p) => (p.$tall ? 21 : 19)}px;
    padding-top:${(p) => (p.$tall ? 2 : 0)}px;
    font:12px/18px ${roboto};
`
const Status = styled.div`
    flex:${(p) => (p.$w ? `0 0 ${p.$w}px` : "1")};
    min-width:0;
    display:flex;
    justify-content:${(p) => (p.$right ? "flex-end" : "space-between")};
    padding:${(p) => (p.$bold || p.$mono ? "0 3px" : "0 1px")};
    white-space:nowrap;
    border:1px solid #a0a0a0;
    border-right-color:#fff;
    border-bottom-color:#f0f0f0;
    ${(p) => p.$plain && "border-color:transparent;"}
    ${(p) => p.$bold && `font:bold 11px/17px ${ui};`}
    ${(p) => p.$mono && `font:bold 11px/17px "Liberation Mono", monospace;`}
    svg { align-self:flex-end; }
`
const ScrollBar = styled.div`
    display:flex;
    height:15px;
    button {
        width:17px;
        padding:0;
        display:flex;
        align-items:center;
        justify-content:center;
        background:#f0f0f0;
        border:1px solid #fff;
        border-right-color:#696969;
        border-bottom-color:#696969;
    }
`
const Track = styled.div`
    flex:${(p) => p.$grow};
    background:#f8f8f8;
`
const Thumb = styled.div`
    flex:${(p) => p.$grow};
    background:#f0f0f0;
    border:1px solid #fff;
    border-right:1px solid #696969;
    border-bottom:1px solid #696969;
`
const Workspace = styled.section`
    flex:1;
    min-height:640px;
    position:relative;
    overflow:hidden;
    background:#ababab;
    border-left:1px solid #30c0c0;
    box-shadow:inset 1px 0 0 #d8f0f0;
`
const PaletteWindow = styled.article`
    position:absolute;
    left:${(p) => p.$x - 1}px;
    top:${(p) => p.$y}px;
    padding:0 2px 2px;
    border:1px solid #4a5058;
    border-radius:7px 7px 0 0;
    background:linear-gradient(#e4ebf2 0, #bccddd 4px, #d4e2ee 25px, #e4ecf4 26px);
`
const PaletteTitle = styled.header`
    display:flex;
    align-items:center;
    width:${(p) => p.$width}px;
    height:24px;
    padding:0 2px 0 4px;
    h2 {
        flex:1;
        min-width:0;
        margin:0;
        overflow:hidden;
        font-size:11px;
        font-weight:400;
        color:#4a5560;
    }
`
const PinButton = styled.button`
    width:20px;
    height:20px;
    flex:none;
    padding:0;
    border:2px solid #3c5f7c;
    border-radius:3px;
    background:linear-gradient(#e8f4fc 0, #a8d4f0 50%, #68b0e0 100%);
`
const CloseButton = styled.button`
    width:20px;
    height:20px;
    flex:none;
    margin-left:1px;
    padding:1px;
    border:1px solid #8496ac;
    border-radius:2px;
    background:#ccd9e8;
`
const CellGrid = styled.div`
    display:grid;
    grid-template-columns:repeat(${(p) => p.$cols}, ${(p) => p.$w}px);
    grid-auto-rows:${(p) => p.$h}px;
    font:${(p) => p.$font || `15px ${serif}`};
    button:first-child {
        box-shadow:inset 1px 1px 0 #696969, inset 2px 2px 0 #fff, inset -2px -2px 0 #696969;
    }
`
const CellButton = styled.button`
    display:flex;
    align-items:center;
    justify-content:center;
    padding:0;
    border:0;
    overflow:hidden;
    color:#000;
    background:#f0f0f0;
    box-shadow:inset 1px 1px 0 #fff, inset -1px -1px 0 #696969, inset -2px -2px 0 #a8a8a8;
    ${(p) => p.$size && `font-size:${p.$size}px;`}
`
const Letter = styled.span`
    width:31px;
    height:32px;
    margin-top:8px;
    border:1px solid #000;
    border-radius:3px;
    font:500 26px/31px Roboto, sans-serif;
`
export default App
